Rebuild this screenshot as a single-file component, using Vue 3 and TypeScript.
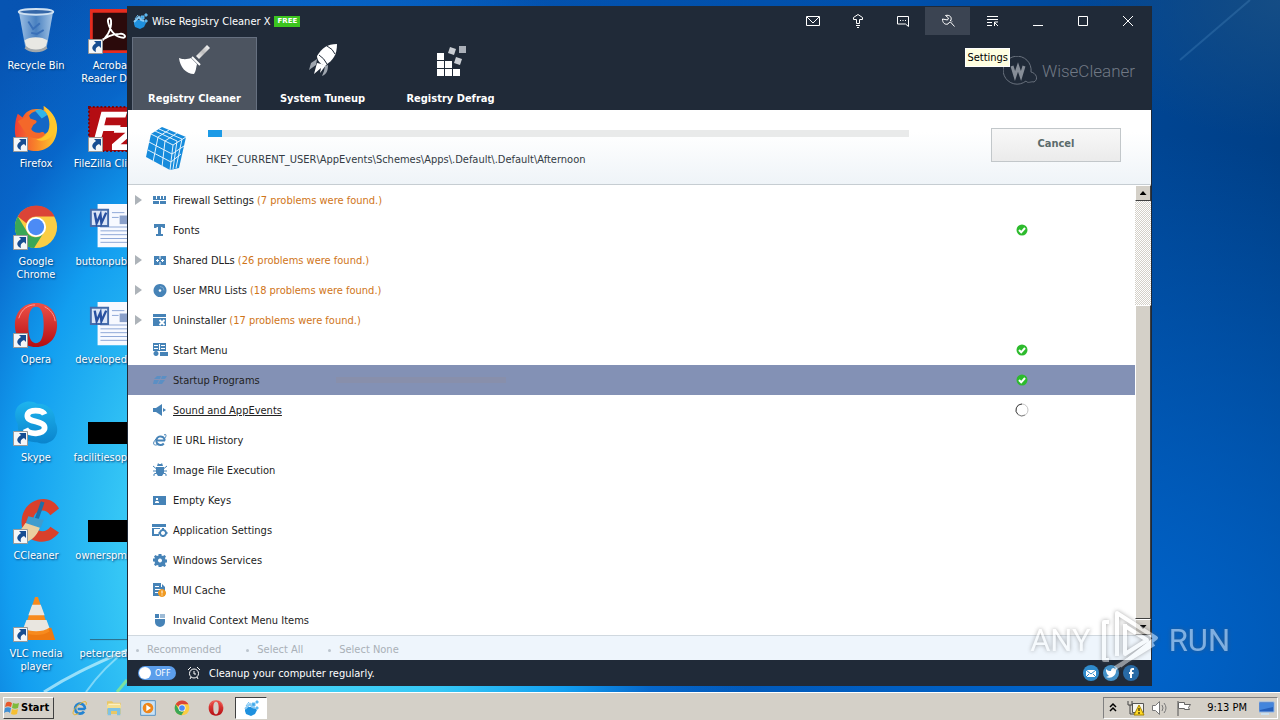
<script setup lang="ts">
import { ref } from 'vue'

interface Part { d: string; fill?: string; stroke?: string; w?: number }
interface Row { label: string; problems?: number; state?: 'ok' | 'busy'; mode?: 'selected' | 'current'; icon: Part[] }
interface Shortcut { name: string; icon: string; linked?: boolean }

const blue = '#4683b7'

const rows: Row[] = [
  { label: 'Firewall Settings', problems: 7, icon: [{ d: 'M1 4h3v3h1V4h3v3h1V4h2v3h1V4h2v4H1zM1 9h6v3H1zM8 9h6v3H8z' }] },
  { label: 'Fonts', state: 'ok', icon: [{ d: 'M2 2h11v4h-2l-1-1H9v7h2v2H4v-2h2V5H5L4 6H2z' }] },
  { label: 'Shared DLLs', problems: 26, icon: [{ d: 'M2 4h12v9H2z' }, { d: 'M8 4v3M8 10v3M4 8.500h3M9 8.500h3M5.500 7v3M10.500 7v3', stroke: '#fff', w: 1 }] },
  { label: 'User MRU Lists', problems: 18, icon: [{ d: 'M8 2a6.500 6.500 0 1 0 .01 0zM8 7.200a1.300 1.300 0 1 1-.01 0z' }, { d: 'M8 4.500a4 4 0 0 1 4 4', stroke: '#7fabd0', w: 1 }] },
  { label: 'Uninstaller', problems: 17, icon: [{ d: 'M1 2h13v3H1zM1 6h13v8H1z' }, { d: 'M7.500 8l5 5m0-5l-5 5', stroke: '#fff', w: 2 }] },
  { label: 'Start Menu', state: 'ok', icon: [{ d: 'M1 1h13v8H1z' }, { d: 'M2 3.500h4M2 6.500h4M7.500 2v6M9 3.500h4M9 6.500h4', stroke: '#fff', w: 1 }, { d: 'M4 9a2.500 2.500 0 1 0 .01 0zM8 10h8v4H8z' }] },
  { label: 'Startup Programs', state: 'ok', mode: 'selected', icon: [{ d: 'M5 4h4L8 7H2zM10 4h5l-2 3H9zM2 8h5l-2 4H1zM8 8h5l-3 4H6z', fill: '#5b8fc4' }] },
  { label: 'Sound and AppEvents', state: 'busy', mode: 'current', icon: [{ d: 'M1 6h3l6-4v12l-6-4H1zM11 6l3 2-3 2z' }] },
  { label: 'IE URL History', icon: [{ d: 'M13 8.500H5M12.800 8.500a4.300 4.300 0 1 0-1 3', stroke: blue, w: 2 }, { d: 'M12 3c3-2 2 2 1 3M4 7c-4 4-3 8 3 5', stroke: blue, w: 1 }] },
  { label: 'Image File Execution', icon: [{ d: 'M6 1l1 1h2l1-1 1 3H5zM4 5h8v6l-2 3H6l-2-3z' }, { d: 'M1 4l3 2.500M15 4l-3 2.500M1 9h14M2 14v-2l3-1M14 14v-2l-3-1', stroke: blue, w: 1 }] },
  { label: 'Empty Keys', icon: [{ d: 'M1 4h13v9H1z' }, { d: 'M4 6h2v2H4zM3 10l1-1h2l1 1v1H3z', fill: '#fff' }] },
  { label: 'Application Settings', icon: [{ d: 'M0 2h14v3H0zM0 6h2v6h5v2H0zM2 6h6v1H2z' }, { d: 'M11 8a3 3 0 1 0 .01 0z', stroke: blue, w: 2 }, { d: 'M11 6v2M11 13v2M6.500 11h2M13.500 11h2', stroke: blue, w: 2 }] },
  { label: 'Windows Services', icon: [{ d: 'M6.500 2h3v1.500l1.500.5 1.500-1 1.500 1.500-1 1.500.5 1.500H15v3h-1.500l-.5 1.500 1 1.500-1.500 1.500-1.500-1-1.500.5V15h-3v-1.500L5 13l-1.500 1L2 12.500 3 11l-.5-1.500H1v-3h1.500L3 6 2 4.500 3.500 3 5 4l1.500-.5zM8 6.500a2 2 0 1 0 .01 0z' }] },
  { label: 'MUI Cache', icon: [{ d: 'M1 1h8l4 4v9H1z' }, { d: 'M3 4.500h4M3 7.500h6M3 10.500h4M9.500 1v4', stroke: '#fff', w: 1 }, { d: 'M10 7a4 4 0 1 0 .01 0z', fill: '#f19a22' }, { d: 'M10 8.500v3M10 12.500v1', stroke: '#fff', w: 1 }] },
  { label: 'Invalid Context Menu Items', icon: [{ d: 'M3 7h10v3a5 5 0 0 1-10 0zM3 2h4v4H3z' }, { d: 'M8 2h5v4H8z', fill: '#9dbbd6' }] },
]

const leftIcons: Shortcut[] = [
  { name: 'Recycle Bin', icon: 'bin' },
  { name: 'Firefox', icon: 'firefox', linked: true },
  { name: 'Google Chrome', icon: 'chrome', linked: true },
  { name: 'Opera', icon: 'opera', linked: true },
  { name: 'Skype', icon: 'skype', linked: true },
  { name: 'CCleaner', icon: 'ccleaner', linked: true },
  { name: 'VLC media player', icon: 'vlc', linked: true },
]
const rightIcons: Shortcut[] = [
  { name: 'Acroba\nReader D', icon: 'acrobat', linked: true },
  { name: 'FileZilla Cli', icon: 'filezilla', linked: true },
  { name: 'buttonpub', icon: 'word' },
  { name: 'developed', icon: 'word' },
  { name: 'facilitiesop', icon: 'black' },
  { name: 'ownerspm', icon: 'black' },
  { name: 'petercrea', icon: 'line' },
]

const tabs = ['Registry Cleaner', 'System Tuneup', 'Registry Defrag']
const activeTab = ref(0)
const autoClean = ref(false)
const picks = ['Recommended', 'Select All', 'Select None']
const launchers = [
  { name: 'Internet Explorer', icon: 'ie' },
  { name: 'Explorer', icon: 'folder' },
  { name: 'Media Player', icon: 'player' },
  { name: 'Chrome', icon: 'chrome' },
  { name: 'Opera', icon: 'opera' },
]
const controls = [
  { name: 'Mail', d: 'M2.500 4.500h13v9h-13zM3 5l6 6 6-6' },
  { name: 'Upgrade', d: 'M7.500 11.500V7.500h-3V5.500L9 2.500l4.500 3v2h-3v4zM7 13.500h4M8 15.500h2' },
  { name: 'Feedback', d: 'M3.500 4.500h11v10l-3-2.500h-8zM6 8.500h1M8.500 8.500h1M11 8.500h1' },
  { name: 'Settings', d: 'M6.500 3.500L9.500 6 8.500 8 6 7.500 3.500 7c0 4 2.500 6 5.500 5l1-1.500 1.500-.5 4 4.500M6.500 3.500c4-1 6.500 1.500 5.500 4.500l-1 1M12 8.500l1 1' },
  { name: 'Menu', d: 'M3 4.500h11M3 7.500h11M3 10.500h5M3 13.500h5M14 14l-4-4M10.500 14v-4H14' },
  { name: 'Minimize', d: 'M4 13.500h10' },
  { name: 'Maximize', d: 'M4.500 4.500h9v9h-9z' },
  { name: 'Close', d: 'M4 4l10 10M14 4L4 14' },
]
</script>

<template>
  <div class="desktop">
    <svg class="defs" width="0" height="0" aria-hidden="true">
      <defs>
        <linearGradient id="g-fade" x1="0" y1="1" x2="1" y2="0"><stop offset="0" stop-color="#fff" /><stop offset=".5" stop-color="#bbb" /><stop offset="1" stop-color="#fff" /></linearGradient>
        <linearGradient id="g-red" x1="0" y1="0" x2="0" y2="1"><stop offset="0" stop-color="#ee5148" /><stop offset="1" stop-color="#b50d12" /></linearGradient>
        <linearGradient id="g-fox" x1="0" y1="0" x2="1" y2="0"><stop offset="0" stop-color="#ef3e36" /><stop offset=".5" stop-color="#f8842a" /><stop offset="1" stop-color="#ffcf2e" /></linearGradient>
        <linearGradient id="g-sky" x1="0" y1="0" x2="0" y2="1"><stop offset="0" stop-color="#1eb4ee" /><stop offset="1" stop-color="#0a84cd" /></linearGradient>
        <linearGradient id="g-bin" x1="0" y1="0" x2="1" y2="0"><stop offset="0" stop-color="#b9d4ee" /><stop offset=".5" stop-color="#5588c2" /><stop offset="1" stop-color="#c0d8ee" /></linearGradient>
      </defs>
      <symbol id="bin" viewBox="0 0 48 48">
        <path d="M6 3l7 39c5 4 17 4 22 0l7-39z" fill="url(#g-bin)" opacity=".85" />
        <path d="M12 34c6-5 19-4 24 0l-2 7c-6 4-14 4-20 0z" fill="#e8e8e3" />
        <path d="M16 14l5 8 7-6M19 26l6 1 7-4" fill="none" stroke="#3a70b8" stroke-width="2" />
        <ellipse cx="24" cy="4" rx="18" ry="3" fill="#3567a8" stroke="#cfe1f2" stroke-width="2" />
        <path d="M13 41c5 5 17 5 22 0" fill="none" stroke="#a2a8ab" stroke-width="3" />
      </symbol>
      <symbol id="firefox" viewBox="0 0 48 48">
        <path d="M5 8l5 4c3-6 8-9 14-9 3 0 6 0 8 2V0c8 5 14 13 14 23 0 14-9 24-22 24S2 38 2 26C2 18 3 13 5 8z" fill="url(#g-fox)" />
        <circle cx="27" cy="18" r="13" fill="#1467c6" />
        <path d="M23 5c5-3 10-1 13 4l-6 4z" fill="#30b6ea" />
        <path d="M5 16c4-3 8-3 11-8l2 5 6 2c2 2-1 3-3 5l-2 4c2 4 7 5 11 3 3 0 4 2 2 4-5 4-12 3-17 0z" fill="#f4682a" />
        <path d="M32 0c2 7 6 11 6 19 0 10-6 15-14 16 9 4 20-3 21-14 0-9-6-16-13-21z" fill="#ffc72b" />
      </symbol>
      <symbol id="chrome" viewBox="0 0 48 48">
        <circle cx="24" cy="24" r="22" fill="#fbcd44" />
        <path d="M5 13a22 22 0 0 1 38.500 0H24a11 11 0 0 0-10 7z" fill="#db4437" />
        <path d="M5 13a22 22 0 0 0 17 33l10-16a10 10 0 0 1-18-2z" fill="#3aa757" />
        <circle cx="24" cy="24" r="10.500" fill="#fff" /><circle cx="24" cy="24" r="8.500" fill="#4c8bf5" />
      </symbol>
      <symbol id="opera" viewBox="0 0 48 48">
        <path fill-rule="evenodd" d="M24 1C10 1 2 11 2 24s8 23 22 23 22-10 22-23S38 1 24 1zM24 5c6 0 8 8 8 19s-2 19-8 19-8-8-8-19 2-19 8-19z" fill="url(#g-red)" />
        <path d="M6 17C9 7 16 3 23 3M33 5c6 3 10 8 11 15" stroke="#ff9c93" stroke-width="1" fill="none" />
      </symbol>
      <symbol id="skype" viewBox="0 0 48 48">
        <path d="M13 2c5-1 9 0 12 2 11-1 20 8 19 19 5 9 1 20-9 22-4 1-7 0-10-1C13 45 4 36 5 25-1 15 3 4 13 2z" fill="url(#g-sky)" />
        <path d="M33 15c-2-5-17-6-18 1-1 8 18 5 18 13 0 7-17 8-20 1" fill="none" stroke="#fff" stroke-width="6" />
      </symbol>
      <symbol id="ccleaner" viewBox="0 0 48 48">
        <path d="M48 11l-9 7c-3-5-8-6-13-4-7 4-7 17 1 20 5 2 9 0 12-4l9 6c-6 8-14 11-23 9C14 43 8 34 9 23 10 10 20 1 32 1c7 0 13 4 16 10z" fill="#d9402c" />
        <path d="M31 4l-7 20" stroke="#1f6ea6" stroke-width="4" />
        <path d="M16 19l16 4-3 8-16-4z" fill="#3f9cce" /><path d="M13 26l15 5c-2 6-6 11-12 14-6 0-12-2-15-6 5-3 9-8 12-13z" fill="#ead0a1" />
      </symbol>
      <symbol id="vlc" viewBox="0 0 48 48">
        <path d="M9 34l-5 12h40l-4-13z" fill="#ee7910" />
        <path d="M23 1h3l12 36c-7 5-21 5-27 0z" fill="#f78a1d" />
        <path d="M20 9h9l4 11H16zM14 25h21l3 8c-7 5-21 5-27 0z" fill="#e9e6e0" />
      </symbol>
      <symbol id="acrobat" viewBox="0 0 48 48">
        <path d="M2 1h46v46H2z" fill="#e62c1f" /><path d="M5 5h43v39H5z" fill="#2b0a0b" />
        <path d="M12 36c7-4 13-13 12-23-1-4-4-2-3 2 2 10 9 16 16 16 4-1 0-5-4-4-6 0-16 3-22 10z" fill="none" stroke="#fff" stroke-width="2" />
      </symbol>
      <symbol id="filezilla" viewBox="0 0 48 48">
        <path d="M1 1h47v46H1z" fill="#b40d13" stroke="#7b0509" stroke-width="2" stroke-dasharray="2 2" />
        <path d="M14 6h27l-2 6H19l-2 8h17l-1 6H16l-4 14H5zM28 22h20v6L34 40h14v6H25v-6l14-12H27z" fill="#fff" />
      </symbol>
      <symbol id="word" viewBox="0 0 48 48">
        <path d="M10 0h38v45H10z" fill="#f7f9ff" />
        <path d="M25 9h13M25 14h7M13 24h31M13 28h31M13 32h31M13 36h31M13 40h31" stroke="#8ba5d6" stroke-width="1" />
        <path d="M33 12h12v9H33z" fill="#8aa0ca" />
        <path d="M3 6h18v17H3z" fill="#dbe5f7" stroke="#466cab" stroke-width="2" />
        <path d="M7 9l2 11 4-9 1 9 5-11" fill="none" stroke="#2850a0" stroke-width="2.500" />
      </symbol>
      <symbol id="black" viewBox="0 0 48 48"><path d="M0 23h48v23H0z" fill="#000" /></symbol>
      <symbol id="line" viewBox="0 0 48 48"><path d="M2 45.500h46" stroke="#2d6680" /></symbol>
      <symbol id="ie" viewBox="0 0 48 48">
        <path d="M40 27H17M39 27a15 15 0 1 0-3 8" fill="none" stroke="#2383d2" stroke-width="8" />
        <path d="M42 15c5-14-7-12-19-3C9 22-1 38 5 43c3 3 10 0 15-4" fill="none" stroke="#e8b52c" stroke-width="3" />
      </symbol>
      <symbol id="folder" viewBox="0 0 48 48">
        <path d="M3 4h15l4 4h22v34H3z" fill="#e9c765" /><path d="M7 11h35v12H7z" fill="#fff8d9" />
        <path d="M3 14h42v12H3z" fill="#f5df91" /><path d="M5 24h38v22H33V33H15v13H5z" fill="#7fc2e4" />
      </symbol>
      <symbol id="player" viewBox="0 0 48 48">
        <path d="M2 2h44v44H2z" fill="#cae3f7" stroke="#5a94c5" stroke-width="3" /><circle cx="24" cy="24" r="16" fill="#ef861b" /><path d="M19 14l14 10-14 10z" fill="#fff" />
      </symbol>
      <symbol id="wise" viewBox="0 0 16 16">
        <path d="M2 8l3-1 6 0 3 3-2 4-4 2-5-2-1-3z" fill="#1e90de" /><path d="M3 6l3-4M9 3h3v3H9zM13 1h2v2h-2zM13 7h2v2h-2z" stroke="#67bdf4" fill="#3ca4e5" />
        <path d="M2 9l5-5 2 3 3 1" stroke="#8ac9f2" fill="none" stroke-width="2" />
      </symbol>
      <symbol id="arrow" viewBox="0 0 15 15">
        <path d="M.5.500h14v14H.5z" fill="#f4f6f8" stroke="#999" /><path d="M6 2h7v7l-2-2c-3 1-4 3-3 6-5-2-5-6 0-9z" fill="#174d91" />
      </symbol>
    </svg>

    <main class="screen">
      <svg class="wallpaper" viewBox="0 0 1280 692" preserveAspectRatio="none" aria-hidden="true">
        <g fill="none" stroke="#e5ffff">
          <path d="M44 692C72 674 96 664 127 650" stroke-width="3" opacity=".6" />
          <path d="M86 692C98 675 109 663 127 650" stroke-width="2" opacity=".45" />
          <path d="M117 692l10-12" stroke="#9af07c" stroke-width="3" opacity=".7" />
          <path d="M1180 60Q1215 30 1250 0" stroke="#68a9da" stroke-width="2" opacity=".22" />
        </g>
      </svg>

      <nav class="icons" aria-label="Desktop">
        <ul class="col">
          <li v-for="s in leftIcons" :key="s.name">
            <a href="#" class="shortcut">
              <span class="pic"><svg width="46" height="46"><use :href="'#' + s.icon" /></svg><svg v-if="s.linked" class="link" width="15" height="15"><use href="#arrow" /></svg></span>
              <span class="cap">{{ s.name }}</span>
            </a>
          </li>
        </ul>
        <ul class="col second">
          <li v-for="s in rightIcons" :key="s.name">
            <a href="#" class="shortcut">
              <span class="pic"><svg width="46" height="46"><use :href="'#' + s.icon" /></svg><svg v-if="s.linked" class="link" width="15" height="15"><use href="#arrow" /></svg></span>
              <span class="cap">{{ s.name }}</span>
            </a>
          </li>
        </ul>
      </nav>

      <section class="window">
        <header class="head">
          <div class="titlebar">
            <svg width="16" height="16"><use href="#wise" /></svg>
            <h1>Wise Registry Cleaner X</h1>
            <span class="free">FREE</span>
            <div class="controls">
              <button v-for="c in controls" :key="c.name" type="button" :aria-label="c.name" :class="{ hover: c.name === 'Settings' }">
                <svg width="18" height="18" viewBox="0 0 18 18"><path :d="c.d" fill="none" stroke="#fff" /></svg>
              </button>
            </div>
          </div>
          <div class="tabrow">
            <button v-for="(t, i) in tabs" :key="t" type="button" class="tab" :class="{ active: i === activeTab }" @click="activeTab = i">
              <svg v-if="i === 0" width="34" height="34" viewBox="0 0 34 34">
                <path d="M18 13L29 2l3 3-11 11z" fill="url(#g-fade)" /><path d="M14 14l8 8" stroke="#fff" stroke-width="2" />
                <path d="M1 15c5 2 9 1 12 0l6 6c-1 4-1 7-3 10C8 31 2 24 1 15z" fill="#fff" />
              </svg>
              <svg v-else-if="i === 1" width="34" height="34" viewBox="0 0 34 34">
                <path d="M11 13c5-8 10-12 20-12 0 11-4 16-11 21-4 1-9-4-9-9z" fill="#fff" />
                <path d="M11 16l-6 4-2 7 7-5zM19 23l-1 5-2 5c5-2 6-6 6-11z" fill="#9ea5ae" />
                <path d="M11 20l-3 11 7-6-1 5 6-8" fill="#fff" />
                <path d="M21 3q6 3 8 8M13 12q5 3 8 9" stroke="#202a38" fill="none" />
              </svg>
              <svg v-else width="34" height="34" viewBox="0 0 34 34">
                <path d="M3 10h7v7H3zM3 18h7v7H3zM11 18h7v7h-7zM3 26h7v7H3zM11 26h7v7h-7zM19 26h7v7h-7z" fill="#fff" />
                <path d="M16 4l6 2-2 6-6-2zM22 14l6 2-2 6-6-2z" fill="#c9cdd3" /><path d="M25 3h7v7h-7z" fill="#aaafb8" />
              </svg>
              <span>{{ t }}</span>
            </button>
            <div class="brand">
              <svg width="34" height="31" viewBox="0 0 34 31"><g fill="none" stroke="#69717d"><path d="M28 16a14 14 0 1 0-5 9c2 3 5 0 8 1 5-3 2-9-3-10z" /></g><path d="M9 10l3 10 3-9 3 9 3-10" fill="none" stroke="#868d97" stroke-width="3" /></svg>
              <span>WiseCleaner</span>
            </div>
          </div>
          <div class="tip" role="tooltip">Settings</div>
        </header>

        <section class="scan">
          <svg width="44" height="46" viewBox="0 0 44 46">
            <path d="M7 9L18 2l24 10-7 31-9 2L2 32z" fill="#168bdc" />
            <path d="M7 9l22 11-3 25M29 20l13-8M11 6l22 10-4 28M15 4l23 10-6 29M14 12L9 37M21 16l-3 26M5 17l23 12 12-8M4 25l23 12 10-8M14 12l11-7M21 16l12-8" fill="none" stroke="#e3f2fc" />
          </svg>
          <div class="status">
            <div class="bar" role="progressbar" aria-valuenow="2" aria-valuemin="0" aria-valuemax="100"><i></i></div>
            <p>HKEY_CURRENT_USER\AppEvents\Schemes\Apps\.Default\.Default\Afternoon</p>
          </div>
          <button type="button" class="cancel">Cancel</button>
        </section>

        <div class="body">
          <ul class="list">
            <li v-for="r in rows" :key="r.label" :class="r.mode">
              <button v-if="r.problems" type="button" class="expand" :aria-label="'Expand ' + r.label"></button>
              <span v-else class="expand-gap"></span>
              <svg width="16" height="16" viewBox="0 0 16 16" aria-hidden="true">
                <path v-for="(p, i) in r.icon" :key="i" :d="p.d" fill-rule="evenodd" :fill="p.stroke ? 'none' : p.fill || blue" :stroke="p.stroke || 'none'" :stroke-width="p.w || 0" />
              </svg>
              <span class="name">{{ r.label }}</span>
              <span v-if="r.problems" class="found">({{ r.problems }} problems were found.)</span>
              <span v-if="r.mode === 'selected'" class="ghost"></span>
              <span class="state">
                <svg v-if="r.state === 'ok'" width="12" height="12" viewBox="0 0 12 12"><circle cx="6" cy="6" r="5.500" fill="#2dbb2d" /><path d="M3 6l2.200 2.300L9 4" fill="none" stroke="#fff" stroke-width="2" /></svg>
                <svg v-else-if="r.state === 'busy'" width="14" height="14" viewBox="0 0 14 14" fill="none"><circle cx="7" cy="7" r="6" stroke="#c4c4c4" /><path d="M7 1a6 6 0 0 0-4 10.500" stroke="#444" /><path d="M3 11.500a6 6 0 0 0 7 .5" stroke="#888" /></svg>
              </span>
            </li>
          </ul>
          <div class="scroll">
            <button type="button" class="raised" aria-label="Scroll up"><i class="up"></i></button>
            <div class="track"></div>
            <div class="thumb raised"></div>
            <button type="button" class="raised" aria-label="Scroll down"><i class="down"></i></button>
          </div>
        </div>

        <div class="picks"><button v-for="p in picks" :key="p" type="button" disabled>{{ p }}</button></div>

        <footer class="foot">
          <label class="switch"><input v-model="autoClean" type="checkbox" aria-label="Cleanup your computer regularly" /><span>OFF</span></label>
          <svg width="14" height="14" viewBox="0 0 14 14" fill="none" stroke="#fff"><circle cx="7" cy="7.500" r="4.500" /><path d="M7 5v3h2M1 4l3-3M13 4l-3-3M3 13l1-2M11 13l-1-2" /></svg>
          <span class="note">Cleanup your computer regularly.</span>
          <a href="#" aria-label="Mail"><svg width="16" height="16" viewBox="0 0 16 16"><circle cx="8" cy="8" r="8" fill="#2f8bcc" /><path d="M3 5h10v7H3z" fill="#fff" /><path d="M3 5l5 4 5-4M3 12l3-3M13 12l-3-3" fill="none" stroke="#2f8bcc" /></svg></a>
          <a href="#" aria-label="Twitter"><svg width="16" height="16" viewBox="0 0 16 16"><circle cx="8" cy="8" r="8" fill="#4391c8" /><path d="M3 4c2 2 3 2 5 2 0-3 3-4 4-2l2-1-1 3c0 5-5 8-10 6l3-1-2-2-1-3z" fill="#fff" /></svg></a>
          <a href="#" aria-label="Facebook"><svg width="16" height="16" viewBox="0 0 16 16"><circle cx="8" cy="8" r="8" fill="#286aa5" /><path d="M11 4H9.500Q8 4 8 6v7M6 8h4.500" fill="none" stroke="#fff" stroke-width="2" /></svg></a>
        </footer>
      </section>

      <div class="mark">
        <span>ANY</span>
        <svg width="62" height="62" viewBox="0 0 62 62" fill="none" stroke="#fff" stroke-width="4" stroke-linejoin="round"><path d="M10 12H5v38h5M18 46V3l39 25-36 28M26 14v30l22-14-22-14" /><path d="M16 58l39-24" /></svg>
        <span>RUN</span>
      </div>
    </main>

    <footer class="taskbar">
      <button type="button" class="start">
        <svg width="16" height="16" viewBox="0 0 16 16"><path d="M2 3c2-2 4-1 6 0L7 7C5 6 3 6 1 7z" fill="#e8582b" /><path d="M9 3c2 1 4 1 6 0l-1 5c-2 1-4 1-6 0z" fill="#7fba3b" /><path d="M1 8c2-1 4-1 6 0l-1 5c-2-2-4-1-6 0z" fill="#3f8fd4" /><path d="M8 9c2 1 4 1 6 0l-1 5c-2 1-4 1-6 0z" fill="#f6bf32" /></svg>
        Start
      </button>
      <div class="quick">
        <button v-for="l in launchers" :key="l.name" type="button" :aria-label="l.name"><svg width="16" height="16"><use :href="'#' + l.icon" /></svg></button>
      </div>
      <button type="button" class="task" aria-label="Wise Registry Cleaner"><svg width="16" height="16"><use href="#wise" /></svg></button>
      <div class="tray">
        <svg width="8" height="12" viewBox="0 0 8 12" fill="none" stroke="#000" stroke-width="1.500"><path d="M1 5l3-3 3 3M1 9l3-3 3 3" /></svg>
        <svg class="net" width="18" height="16" viewBox="0 0 18 16"><path d="M5.500 3.500h11v9h-11z" fill="#f5f5f0" stroke="#555" /><path d="M1 1v4h4V1M3 5v9h5" fill="none" stroke="#444" /><path d="M12 5l5 10H7z" fill="#ffd926" stroke="#a88500" /><path d="M12 8v3M12 12v2" stroke="#000" /></svg>
        <svg width="18" height="16" viewBox="0 0 18 16" fill="none" stroke="#777"><path d="M1.500 5.500h3l4-4v13l-4-4h-3z" fill="#fff" /><path d="M11 5q2 3 0 6M13 3q4 5 0 10" /></svg>
        <svg width="18" height="16" viewBox="0 0 18 16"><path d="M3 1v15" stroke="#555" /><path d="M3.500 2.500h6v2h6l-2 3 1 2h-5v-1h-6z" fill="#fff" stroke="#666" /></svg>
        <time>9:13 PM</time>
        <svg width="16" height="14" viewBox="0 0 16 14"><path d="M0 1h15v10H0z" fill="#245fbb" stroke="#8fb7e9" /><path d="M1 2h13v4L1 9z" fill="#4385dc" /><path d="M2 12h8v2H2z" fill="#cbe0ee" /></svg>
      </div>
    </footer>
  </div>
</template>

<style>
body { margin: 0; }
</style>

<style scoped>
* { box-sizing: border-box; }
.desktop { display: flex; flex-direction: column; height: 100vh; overflow: hidden; font: 11px/14px "DejaVu Sans Condensed", "DejaVu Sans", sans-serif; color: #222; }
button { font: inherit; color: inherit; border: 0; padding: 0; background: none; cursor: pointer; }
ul { list-style: none; margin: 0; padding: 0; }
svg { display: block; flex: none; }
a { color: inherit; text-decoration: none; }
.defs { position: absolute; }
.screen { flex: 1; position: relative; overflow: hidden; background: radial-gradient(ellipse 36% 95% at 23% 80%, #4fdcf8 0%, #35c6f5 38%, #129ef0 62%, rgba(8, 110, 212, .7) 80%, transparent 100%), radial-gradient(ellipse 50% 75% at 86% 94%, #0065cd, transparent), radial-gradient(ellipse 16% 20% at 100% 0, #154d85, transparent), linear-gradient(90deg, #0754b2, #0050ab 70%, #003f86); }
.wallpaper { position: absolute; inset: 0; width: 100%; height: 100%; }
.icons { position: relative; display: flex; width: 127px; }
.col { width: 72px; }
.col li { height: 98px; padding-top: 8px; }
.shortcut { display: flex; flex-direction: column; align-items: center; gap: 5px; color: #fff; text-align: center; text-shadow: 1px 1px 2px #053a70; line-height: 13px; }
.pic { position: relative; display: block; width: 46px; height: 46px; }
.link { position: absolute; left: 0; bottom: 0; }
.cap { white-space: pre-line; }
.second { width: 55px; overflow: hidden; }
.second .shortcut { align-items: flex-end; text-align: right; }
.second .pic { width: 39px; }
.second .cap { white-space: pre; }
.window { position: absolute; inset: 6px 128px 6px 127px; display: flex; flex-direction: column; background: #fff; border: solid #1f2937; border-width: 0 1px; }
.head { position: relative; height: 104px; background: #202a38; color: #fff; }
.titlebar { display: flex; align-items: center; height: 30px; padding-left: 4px; gap: 4px; }
h1 { margin: 0; padding-top: 2px; font-size: 11px; font-weight: 400; }
.free { background: #3bc51f; font: bold 7px/11px "DejaVu Sans", sans-serif; padding: 0 3px; }
.controls { display: flex; margin: 0 1px 0 auto; }
.controls button { display: grid; place-items: center; width: 45px; height: 28px; }
.controls .hover { background: #3b4452; }
.tabrow { display: flex; gap: 3px; padding: 1px 16px 0 4px; }
.tab { display: flex; flex-direction: column; align-items: center; justify-content: space-between; width: 125px; height: 73px; padding: 5px 0 4px; border: 1px solid transparent; border-bottom: 0; font-weight: bold; }
.tab.active { background: #4c5460; border-color: #667080; }
.brand { display: flex; align-items: center; gap: 5px; margin-left: auto; height: 68px; color: #717985; font: 300 17px/20px Roboto, sans-serif; }
.tip { position: absolute; right: 141px; top: 42px; padding: 2px 1px 1px; background: #ffffe1; border: 1px solid #fff; color: #000; }
.scan { display: flex; height: 75px; padding: 0 30px 0 16px; background: linear-gradient(#fff 30%, #eff4f8); border-bottom: 1px solid #c6cdd2; }
.scan > svg { margin-top: 15px; }
.status { flex: 1; margin: 20px 82px 0 18px; color: #333b44; }
.bar { height: 7px; margin-left: 2px; background: #e9eaea; }
.bar i { display: block; width: 2%; height: 100%; background: #1c9ae6; }
.status p { margin: 16px 0 0; white-space: nowrap; }
.cancel { width: 130px; height: 34px; margin-top: 18px; padding-bottom: 2px; border: 1px solid #c2c7ca; background: linear-gradient(#f8f8f8, #ebebeb); color: #5b6b6b; font-weight: bold; }
.body { flex: 1; display: flex; min-height: 0; }
.list { flex: 1; overflow: hidden; }
.list li { display: flex; align-items: center; height: 30px; padding: 0 106px 0 7px; }
.list .selected { background: #8391b5; }
.name, .found { padding-top: 2px; }
.current .name { text-decoration: underline; }
.expand { width: 7px; height: 10px; background: #adb3b9; clip-path: polygon(0 0, 100% 50%, 0 100%); }
.expand-gap { width: 7px; }
.list li > svg { margin: 0 5px 0 10px; }
.found { margin-left: 3px; color: #d07518; }
.ghost { width: 170px; height: 6px; margin-left: 76px; background: #888fab; }
.state { display: grid; place-items: center; width: 14px; margin-left: auto; }
.scroll { display: flex; flex-direction: column; width: 16px; }
.raised { background: #d4d0c8; border: 1px solid; border-color: #fff #404040 #404040 #fff; }
.scroll button { display: grid; place-items: center; height: 16px; flex: none; }
.up, .down { width: 7px; height: 4px; background: #000; clip-path: polygon(50% 0, 100% 100%, 0 100%); }
.down { clip-path: polygon(0 0, 100% 0, 50% 100%); }
.track { flex: 104; background: repeating-conic-gradient(#d4d0c8 0 25%, #fff 0 50%) 0 0 / 2px 2px; }
.thumb { flex: 314; }
.picks { display: flex; gap: 25px; height: 25px; padding: 4px 8px 0; background: #eef5fc; border-top: 1px solid #d0d8df; }
.picks button { color: #a9b0b7; cursor: default; display: flex; align-items: center; gap: 8px; }
.picks button::before { content: ""; width: 3px; height: 3px; background: #bcc5ce; border-radius: 50%; }
.foot { display: flex; align-items: center; height: 26px; padding: 0 12px 0 10px; background: #202a38; color: #fff; }
.switch { display: flex; align-items: center; width: 38px; height: 14px; border-radius: 7px; background: #5c9eeb; margin-right: 11px; font-size: 9px; }
.switch input { appearance: none; width: 12px; height: 12px; margin: 0 4px 0 1px; border-radius: 50%; background: #fff; }
.note { margin: 0 auto 0 8px; padding-top: 2px; }
.foot a { margin-left: 4px; }
.mark { position: absolute; right: 50px; bottom: 20px; display: flex; align-items: center; gap: 8px; color: #fff; opacity: .5; filter: drop-shadow(0 0 2px #555); font: 31px/62px Roboto, "Liberation Sans", sans-serif; }
.taskbar { display: flex; align-items: center; height: 28px; padding: 2px 2px 0 3px; background: #d4d0c8; border-top: 1px solid #fff; color: #000; }
.start { display: flex; align-items: center; gap: 1px; height: 22px; width: 51px; font-weight: bold; border: 1px solid; border-color: #fff #404040 #404040 #fff; }
.quick { display: flex; gap: 18px; margin: 0 11px 0 18px; }
.task { display: grid; place-items: center; width: 32px; height: 22px; background: #fff; border: 1px solid; border-color: #404040 #fff #fff #404040; }
.tray { display: flex; align-items: center; gap: 6px; height: 22px; margin-left: auto; padding: 0 2px 0 5px; border: 1px solid; border-color: #808080 #fff #fff #808080; }
.net { margin-left: 4px; }
time { margin: 0 6px 0 8px; }
</style>
